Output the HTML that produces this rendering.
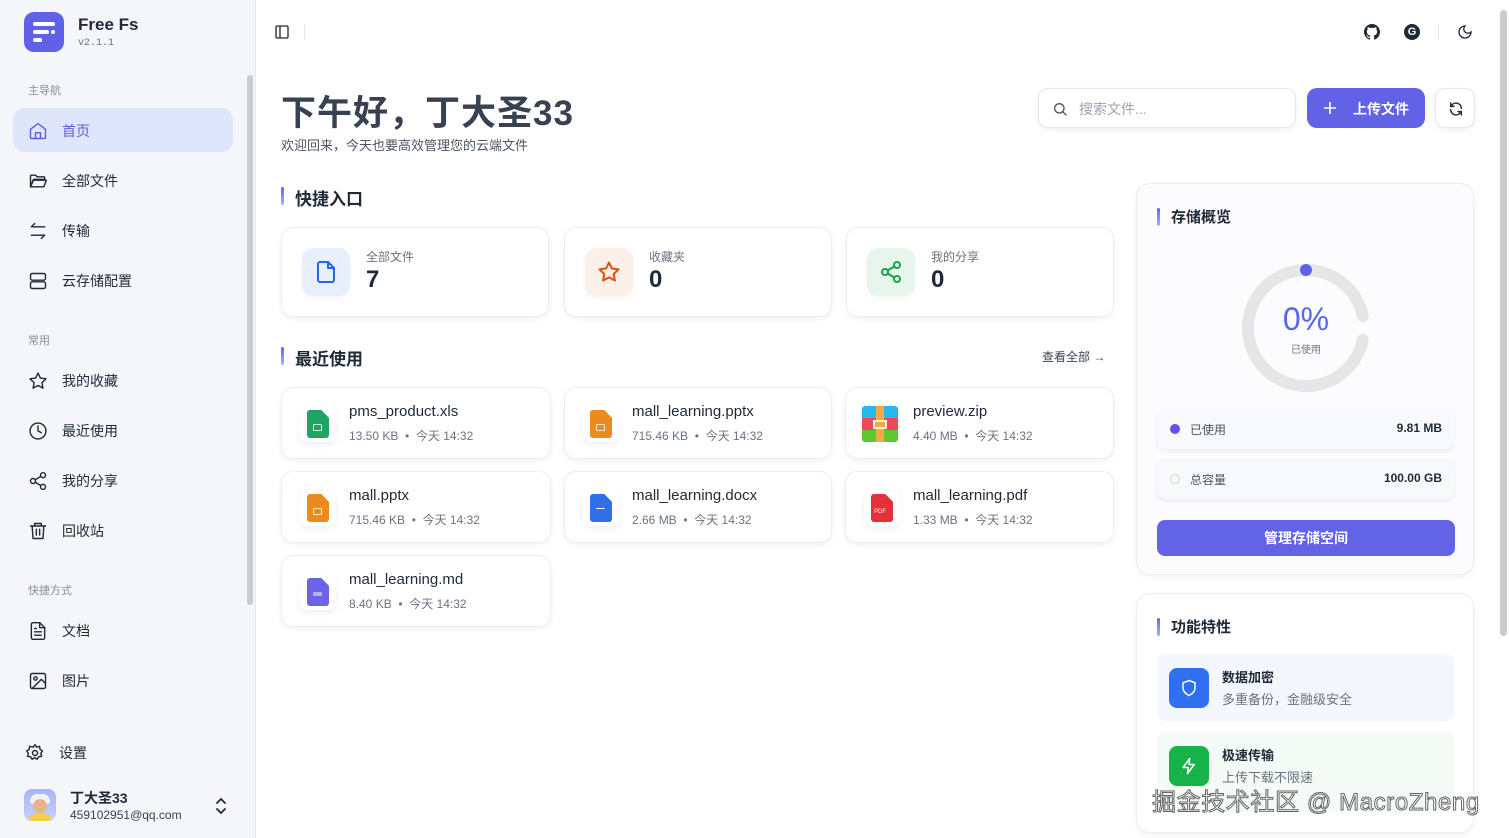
<!DOCTYPE html>
<html><head><meta charset="utf-8">
<style>
*{box-sizing:border-box;margin:0;padding:0}
body{width:1509px;height:838px;overflow:hidden;background:#fff;font-family:"Liberation Sans","Noto Sans CJK SC",sans-serif;color:#1f2937;position:relative}
.abs{position:absolute}
.side{position:absolute;left:0;top:0;width:256px;height:838px;background:#f4f6f9;border-right:1px solid #e5e7eb}
.nav{position:absolute;left:28px;display:flex;align-items:center;font-size:14px;color:#1f2937;height:20px}
.nav svg{width:20px;height:20px;margin-right:14px;fill:none;stroke:#1f2937;stroke-width:1.7;stroke-linecap:round;stroke-linejoin:round}
.grp{position:absolute;left:28px;font-size:11px;color:#8a8f98}
.card{position:absolute;background:#fff;border:1px solid #eceef2;border-radius:12px;box-shadow:0 2px 6px rgba(0,0,0,.06)}
.sec{position:absolute;font-size:17px;font-weight:bold;color:#1f2937;padding-left:14px}
.sec:before{content:"";position:absolute;left:0;top:2px;width:3px;height:18px;border-radius:2px;background:linear-gradient(#6366f1,#a5b4fc)}
.qi{position:absolute;left:20px;top:20px;width:48px;height:48px;border-radius:12px;display:flex;align-items:center;justify-content:center;box-shadow:0 2px 6px rgba(0,0,0,.05)}
.qi svg{width:24px;height:24px;fill:none;stroke-width:2;stroke-linecap:round;stroke-linejoin:round}
.ql{position:absolute;left:84px;top:20px;font-size:12px;color:#6b7280}
.qn{position:absolute;left:84px;top:38px;font-size:24px;font-weight:bold;color:#1f2937}
.fi{position:absolute;left:18px;top:18px;width:36px;height:36px;border-radius:8px;box-shadow:0 3px 8px rgba(0,0,0,.06);display:flex;align-items:center;justify-content:center}
.fn{position:absolute;left:67px;top:15px;font-size:15px;color:#1f2937}
.fm{position:absolute;left:67px;top:39px;font-size:12px;color:#6b7280}
.doc{width:22px;height:28px;border-radius:3px;position:relative;clip-path:polygon(0 0,65% 0,100% 28%,100% 100%,0 100%)}
.doc i{position:absolute;left:6px;top:14px;width:9px;height:7px;border:1.3px solid rgba(255,255,255,.8);border-radius:1px}
</style></head><body>

<div class="side">
  <div class="abs" style="left:24px;top:12px;width:40px;height:40px;border-radius:10px;background:#6161e8">
    <div class="abs" style="left:9px;top:10px;width:22px;height:4px;border-radius:2px;background:#fff"></div>
    <div class="abs" style="left:9px;top:18px;width:16px;height:4px;border-radius:2px;background:#fff"></div>
    <div class="abs" style="left:27px;top:18px;width:4px;height:4px;border-radius:2px;background:#fff"></div>
    <div class="abs" style="left:9px;top:26px;width:9px;height:4px;border-radius:2px;background:#fff"></div>
  </div>
  <div class="abs" style="left:78px;top:15px;font-size:17px;font-weight:bold;color:#1f2937">Free Fs</div>
  <div class="abs" style="left:78px;top:38px;font-size:10px;color:#6b7280;font-family:'Liberation Mono',monospace">v2.1.1</div>
  <div class="grp" style="top:82px">主导航</div>
  <div class="abs" style="left:13px;top:108px;width:220px;height:44px;border-radius:12px;background:#dfe6fb"></div>
  <div class="nav" style="top:121px;color:#5b5fe0"><svg viewBox="0 0 24 24" style="stroke:#5b5fe0"><path d="M3 10l9-7 9 7v10a1 1 0 0 1-1 1H4a1 1 0 0 1-1-1z"/><path d="M9 21v-7h6v7"/></svg>首页</div>
  <div class="nav" style="top:171px"><svg viewBox="0 0 24 24"><path d="M3 6a1 1 0 0 1 1-1h5l2 2h8a1 1 0 0 1 1 1v2H7l-4 9z"/><path d="M3 19l3-8h16l-3 8z"/></svg>全部文件</div>
  <div class="nav" style="top:221px"><svg viewBox="0 0 24 24"><path d="M20 7H4l4-4M4 17h16l-4 4"/></svg>传输</div>
  <div class="nav" style="top:271px"><svg viewBox="0 0 24 24"><rect x="3" y="3" width="18" height="8" rx="2"/><rect x="3" y="13" width="18" height="8" rx="2"/></svg>云存储配置</div>
  <div class="grp" style="top:332px">常用</div>
  <div class="nav" style="top:371px"><svg viewBox="0 0 24 24"><path d="M12 2.5l2.9 6 6.6.9-4.8 4.6 1.2 6.5L12 17.4 6.1 20.5l1.2-6.5L2.5 9.4l6.6-.9z"/></svg>我的收藏</div>
  <div class="nav" style="top:421px"><svg viewBox="0 0 24 24"><circle cx="12" cy="12" r="9.5"/><path d="M12 6v6l4 2"/></svg>最近使用</div>
  <div class="nav" style="top:471px"><svg viewBox="0 0 24 24"><circle cx="18" cy="5" r="3"/><circle cx="6" cy="12" r="3"/><circle cx="18" cy="19" r="3"/><path d="M8.6 13.5l6.8 4M15.4 6.5l-6.8 4"/></svg>我的分享</div>
  <div class="nav" style="top:521px"><svg viewBox="0 0 24 24"><path d="M3 6h18M8 6V3h8v3M5 6l1 15h12l1-15M10 10v7M14 10v7"/></svg>回收站</div>
  <div class="grp" style="top:582px">快捷方式</div>
  <div class="nav" style="top:621px"><svg viewBox="0 0 24 24"><path d="M14 2H6a2 2 0 0 0-2 2v16a2 2 0 0 0 2 2h12a2 2 0 0 0 2-2V8z"/><path d="M14 2v6h6M8 13h8M8 17h8M8 9h2"/></svg>文档</div>
  <div class="nav" style="top:671px"><svg viewBox="0 0 24 24"><rect x="3" y="3" width="18" height="18" rx="2"/><circle cx="9" cy="9" r="2"/><path d="M21 15l-5-5L5 21"/></svg>图片</div>
  <div class="abs" style="left:247px;top:75px;width:6px;height:530px;border-radius:3px;background:#c9cbd0"></div>
  <div class="nav" style="top:743px;left:25px"><svg viewBox="0 0 24 24"><circle cx="12" cy="12" r="3"/><path d="M12 2l2 3 3.5-1 .5 3.5 3 2-2 3 1 3.5-3.5.5-2 3-3-2-3 2-2-3-3.5-.5 1-3.5-2-3 3-2 .5-3.5L10 5z"/></svg>设置</div>
  <div class="abs" style="left:24px;top:789px;width:32px;height:32px;border-radius:8px;background:linear-gradient(#a7b5f7,#c6cffa);overflow:hidden">
    <div class="abs" style="left:6px;top:5px;width:20px;height:10px;border-radius:10px 10px 4px 4px;background:#f3f3f3"></div>
    <div class="abs" style="left:9px;top:10px;width:14px;height:14px;border-radius:50%;background:#e8b48a"></div>
    <div class="abs" style="left:4px;top:25px;width:24px;height:10px;border-radius:8px 8px 0 0;background:#f2cf45"></div>
  </div>
  <div class="abs" style="left:70px;top:788px;font-size:14px;font-weight:bold">丁大圣33</div>
  <div class="abs" style="left:70px;top:808px;font-size:12px;color:#374151">459102951@qq.com</div>
  <svg class="abs" style="left:212px;top:796px" width="18" height="20" viewBox="0 0 18 20" fill="none" stroke="#1f2937" stroke-width="1.8" stroke-linecap="round"><path d="M5 7l4-4 4 4M5 13l4 4 4-4"/></svg>
</div>

<svg class="abs" style="left:274px;top:24px" width="16" height="16" viewBox="0 0 24 24" fill="none" stroke="#1f2937" stroke-width="2"><rect x="3" y="3" width="18" height="18" rx="2"/><path d="M9 3v18"/></svg>
<div class="abs" style="left:304px;top:24px;width:1px;height:16px;background:#e5e7eb"></div>
<svg class="abs" style="left:1364px;top:24px" width="16" height="16" viewBox="0 0 16 16"><path fill="#1f2937" d="M8 0C3.6 0 0 3.6 0 8c0 3.5 2.3 6.5 5.5 7.6.4.1.5-.2.5-.4v-1.4c-2.2.5-2.7-1-2.7-1-.4-.9-.9-1.2-.9-1.2-.7-.5.1-.5.1-.5.8.1 1.200.8 1.2.8.7 1.2 1.9.9 2.3.7.1-.5.3-.9.5-1.1-1.8-.2-3.6-.9-3.6-4 0-.9.3-1.6.8-2.100-.1-.2-.4-1 .1-2.1 0 0 .7-.2 2.2.8.6-.2 1.3-.3 2-.3s1.4.1 2 .3c1.5-1 2.2-.8 2.2-.8.4 1.1.2 1.9.1 2.1.5.6.8 1.3.8 2.1 0 3.1-1.9 3.8-3.6 4 .3.3.6.8.6 1.5v2.2c0 .2.1.5.6.4C13.7 14.5 16 11.5 16 8c0-4.4-3.6-8-8-8z"/></svg>
<div class="abs" style="left:1404px;top:24px;width:16px;height:16px;border-radius:50%;background:#1f2937;color:#fff;font-size:11px;font-weight:bold;text-align:center;line-height:16px">G</div>
<div class="abs" style="left:1438px;top:24px;width:1px;height:16px;background:#e5e7eb"></div>
<svg class="abs" style="left:1457px;top:24px" width="16" height="16" viewBox="0 0 24 24" fill="none" stroke="#1f2937" stroke-width="2" stroke-linecap="round"><path d="M12 3a6 6 0 0 0 9 9 9 9 0 1 1-9-9z"/></svg>
<div class="abs" style="left:1500px;top:10px;width:7px;height:626px;border-radius:4px;background:#c9cbd0"></div>

<div class="abs" style="left:281px;top:85px;font-size:35px;font-weight:bold;color:#374151;letter-spacing:1px">下午好，丁大圣33</div>
<div class="abs" style="left:281px;top:135px;font-size:13px;color:#4b5563">欢迎回来，今天也要高效管理您的云端文件</div>

<div class="abs" style="left:1038px;top:88px;width:258px;height:40px;border:1px solid #e5e7eb;border-radius:10px;box-shadow:0 2px 6px rgba(0,0,0,.06)">
  <svg class="abs" style="left:13px;top:12px" width="16" height="16" viewBox="0 0 24 24" fill="none" stroke="#4b5563" stroke-width="2" stroke-linecap="round"><circle cx="11" cy="11" r="7"/><path d="M21 21l-5-5"/></svg>
  <div class="abs" style="left:40px;top:10px;font-size:14px;color:#9ca3af">搜索文件...</div>
</div>
<div class="abs" style="left:1307px;top:88px;width:118px;height:40px;border-radius:10px;background:#6262e6;color:#fff;font-size:14px;font-weight:bold">
  <svg class="abs" style="left:16px;top:13px" width="14" height="14" viewBox="0 0 14 14" stroke="#fff" stroke-width="1.6"><path d="M7 1v12M1 7h12"/></svg>
  <div class="abs" style="left:46px;top:11px">上传文件</div>
</div>
<div class="abs" style="left:1435px;top:88px;width:40px;height:40px;border:1px solid #e5e7eb;border-radius:10px;box-shadow:0 2px 6px rgba(0,0,0,.06)">
  <svg class="abs" style="left:12px;top:12px" width="16" height="16" viewBox="0 0 24 24" fill="none" stroke="#1f2937" stroke-width="2.2" stroke-linecap="round" stroke-linejoin="round"><path d="M20 11a8 8 0 0 0-14.5-4.5L4 8M4 13a8 8 0 0 0 14.5 4.5L20 16"/><path d="M4 3v5h5M20 21v-5h-5"/></svg>
</div>

<div class="sec" style="left:281px;top:185px">快捷入口</div>
<div class="card" style="left:281px;top:227px;width:268px;height:90px">
  <div class="qi" style="background:#e8effc"><svg viewBox="0 0 24 24" stroke="#2563eb"><path d="M14 2H6a2 2 0 0 0-2 2v16a2 2 0 0 0 2 2h12a2 2 0 0 0 2-2V8z"/><path d="M14 2v6h6"/></svg></div>
  <div class="ql">全部文件</div><div class="qn">7</div>
</div>
<div class="card" style="left:564px;top:227px;width:268px;height:90px">
  <div class="qi" style="background:#fdf0e8"><svg viewBox="0 0 24 24" stroke="#ea4b0c"><path d="M12 2.5l2.9 6 6.6.9-4.8 4.6 1.2 6.5L12 17.4 6.1 20.5l1.2-6.5L2.5 9.4l6.6-.9z"/></svg></div>
  <div class="ql">收藏夹</div><div class="qn">0</div>
</div>
<div class="card" style="left:846px;top:227px;width:268px;height:90px">
  <div class="qi" style="background:#e7f5ec"><svg viewBox="0 0 24 24" stroke="#16a34a"><circle cx="18" cy="5" r="3"/><circle cx="6" cy="12" r="3"/><circle cx="18" cy="19" r="3"/><path d="M8.6 13.5l6.8 4M15.4 6.5l-6.8 4"/></svg></div>
  <div class="ql">我的分享</div><div class="qn">0</div>
</div>

<div class="sec" style="left:281px;top:345px">最近使用</div>
<div class="abs" style="left:1042px;top:348px;font-size:12px;color:#374151">查看全部 →</div>

<div class="card" style="left:281px;top:387px;width:270px;height:72px"><div class="fi"><div class="doc" style="background:#1fa463"><i></i></div></div><div class="fn">pms_product.xls</div><div class="fm">13.50 KB &nbsp;•&nbsp; 今天 14:32</div></div>
<div class="card" style="left:564px;top:387px;width:268px;height:72px"><div class="fi"><div class="doc" style="background:#ec8a1c"><i></i></div></div><div class="fn">mall_learning.pptx</div><div class="fm">715.46 KB &nbsp;•&nbsp; 今天 14:32</div></div>
<div class="card" style="left:845px;top:387px;width:269px;height:72px"><div class="fi" style="left:16px;box-shadow:none"><div style="width:36px;height:36px;border-radius:3px;overflow:hidden;position:relative;background:linear-gradient(#27b7ef 0 33%,#ef4a54 33% 66%,#5ac82f 66%)"><div class="abs" style="left:14px;top:0;width:8px;height:36px;background:#f5a843"></div><div class="abs" style="left:11px;top:14px;width:14px;height:9px;background:#f5a843;border:2px solid #fff3d0"></div></div></div><div class="fn">preview.zip</div><div class="fm">4.40 MB &nbsp;•&nbsp; 今天 14:32</div></div>

<div class="card" style="left:281px;top:471px;width:270px;height:72px"><div class="fi"><div class="doc" style="background:#ec8a1c"><i></i></div></div><div class="fn">mall.pptx</div><div class="fm">715.46 KB &nbsp;•&nbsp; 今天 14:32</div></div>
<div class="card" style="left:564px;top:471px;width:268px;height:72px"><div class="fi"><div class="doc" style="background:#2f6fe8"><i style="border:none;border-top:1.3px solid #fff"></i></div></div><div class="fn">mall_learning.docx</div><div class="fm">2.66 MB &nbsp;•&nbsp; 今天 14:32</div></div>
<div class="card" style="left:845px;top:471px;width:269px;height:72px"><div class="fi"><div class="doc" style="background:#e5303a"><span style="position:absolute;left:3px;top:15px;font-size:6px;color:#fff">PDF</span></div></div><div class="fn">mall_learning.pdf</div><div class="fm">1.33 MB &nbsp;•&nbsp; 今天 14:32</div></div>

<div class="card" style="left:281px;top:555px;width:270px;height:72px"><div class="fi"><div class="doc" style="background:#6c63e8"><i style="border:none;background:rgba(255,255,255,.5);height:4px"></i></div></div><div class="fn">mall_learning.md</div><div class="fm">8.40 KB &nbsp;•&nbsp; 今天 14:32</div></div>

<div class="card" style="left:1136px;top:183px;width:338px;height:392px;border-radius:14px;background:#fcfcfe">
  <div class="sec" style="left:20px;top:22px;font-size:15px">存储概览</div>
  <svg class="abs" style="left:103px;top:78px" width="132" height="132" viewBox="0 0 132 132"><circle cx="66" cy="66" r="58" fill="none" stroke="#e6e6e8" stroke-width="12" stroke-dasharray="340 24.4" stroke-dashoffset="-12" stroke-linecap="round"/><circle cx="66" cy="8" r="6" fill="#6161e6"/></svg>
  <div class="abs" style="left:0;width:338px;top:117px;text-align:center;font-size:32px;color:#5567ea">0%</div>
  <div class="abs" style="left:0;width:338px;top:157px;text-align:center;font-size:10px;color:#6b7280">已使用</div>
  <div class="abs" style="left:20px;top:225px;width:297px;height:40px;border-radius:8px;background:#f8f9fb;box-shadow:0 2px 5px rgba(0,0,0,.07)">
    <div class="abs" style="left:13px;top:15px;width:10px;height:10px;border-radius:50%;background:#6a4cf0"></div>
    <div class="abs" style="left:33px;top:12px;font-size:12px;color:#4b5563">已使用</div>
    <div class="abs" style="right:12px;top:12px;font-size:12px;font-weight:bold">9.81 MB</div>
  </div>
  <div class="abs" style="left:20px;top:275px;width:297px;height:40px;border-radius:8px;background:#f8f9fb;box-shadow:0 2px 5px rgba(0,0,0,.07)">
    <div class="abs" style="left:13px;top:15px;width:10px;height:10px;border-radius:50%;border:1.5px solid #d1d5db"></div>
    <div class="abs" style="left:33px;top:12px;font-size:12px;color:#4b5563">总容量</div>
    <div class="abs" style="right:12px;top:12px;font-size:12px;font-weight:bold">100.00 GB</div>
  </div>
  <div class="abs" style="left:20px;top:336px;width:298px;height:36px;border-radius:8px;background:#6363e6;color:#fff;text-align:center;line-height:36px;font-size:14px;font-weight:bold">管理存储空间</div>
</div>

<div class="card" style="left:1136px;top:593px;width:338px;height:240px;border-radius:14px">
  <div class="sec" style="left:20px;top:22px;font-size:15px">功能特性</div>
  <div class="abs" style="left:20px;top:60px;width:297px;height:67px;border-radius:8px;background:#f4f7fd">
    <div class="abs" style="left:12px;top:14px;width:40px;height:40px;border-radius:8px;background:#2f6ff0"><svg class="abs" style="left:11px;top:11px" width="18" height="18" viewBox="0 0 24 24" fill="none" stroke="#fff" stroke-width="2"><path d="M12 2l8 3v7c0 5-4 8-8 10-4-2-8-5-8-10V5z"/></svg></div>
    <div class="abs" style="left:65px;top:13px;font-size:13px;font-weight:bold">数据加密</div>
    <div class="abs" style="left:65px;top:35px;font-size:13px;color:#6b7280">多重备份，金融级安全</div>
  </div>
  <div class="abs" style="left:20px;top:138px;width:297px;height:80px;border-radius:8px;background:#f4fbf6">
    <div class="abs" style="left:12px;top:14px;width:40px;height:40px;border-radius:8px;background:#18b24a"><svg class="abs" style="left:11px;top:11px" width="18" height="18" viewBox="0 0 24 24" fill="none" stroke="#fff" stroke-width="2" stroke-linejoin="round"><path d="M13 2L4 14h7l-1 8 9-12h-7z"/></svg></div>
    <div class="abs" style="left:65px;top:13px;font-size:13px;font-weight:bold">极速传输</div>
    <div class="abs" style="left:65px;top:35px;font-size:13px;color:#6b7280">上传下载不限速</div>
  </div>
</div>
<div class="abs" style="left:1152px;top:782px;font-size:24px;color:#fff;-webkit-text-stroke:1px #666;letter-spacing:0.6px">掘金技术社区 @ MacroZheng</div>
</body></html>
